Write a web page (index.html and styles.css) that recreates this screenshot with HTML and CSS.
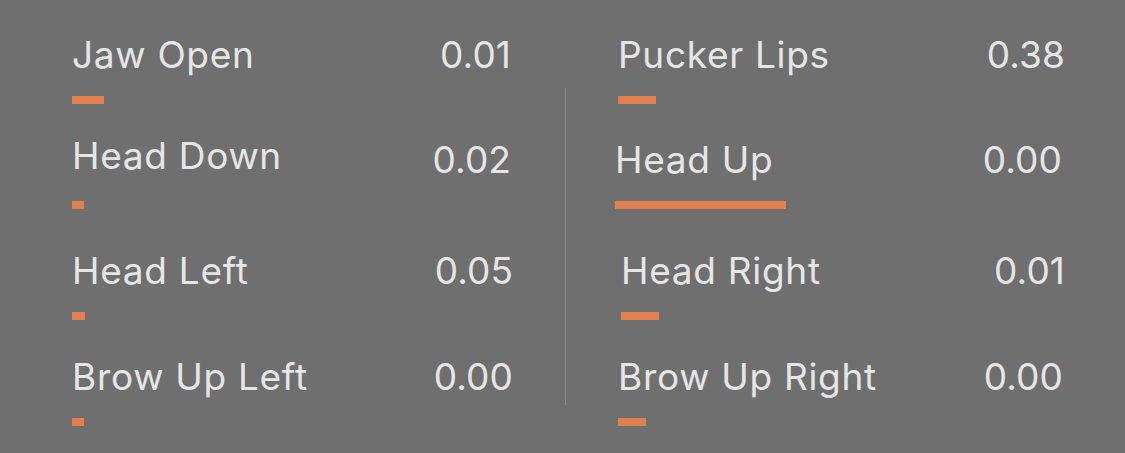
FILE: index.html
```html
<!DOCTYPE html>
<html lang="en">
<head>
<meta charset="utf-8">
<title>Blend Shapes</title>
<link rel="stylesheet" href="styles.css">
</head>
<body>
<div class="panel">
  <div class="column left">
    <div class="item">
      <div class="row"><span class="label">Jaw Open</span><span class="value">0.01</span></div>
      <div class="bar" style="width:32px"></div>
    </div>
    <div class="item">
      <div class="row"><span class="label">Head Down</span><span class="value">0.02</span></div>
      <div class="bar" style="width:12px"></div>
    </div>
    <div class="item">
      <div class="row"><span class="label">Head Left</span><span class="value">0.05</span></div>
      <div class="bar" style="width:13px"></div>
    </div>
    <div class="item">
      <div class="row"><span class="label">Brow Up Left</span><span class="value">0.00</span></div>
      <div class="bar" style="width:12px"></div>
    </div>
  </div>
  <div class="divider"></div>
  <div class="column right">
    <div class="item">
      <div class="row"><span class="label">Pucker Lips</span><span class="value">0.38</span></div>
      <div class="bar" style="width:38px"></div>
    </div>
    <div class="item">
      <div class="row"><span class="label">Head Up</span><span class="value">0.00</span></div>
      <div class="bar" style="width:171px"></div>
    </div>
    <div class="item">
      <div class="row"><span class="label">Head Right</span><span class="value">0.01</span></div>
      <div class="bar" style="width:38px"></div>
    </div>
    <div class="item">
      <div class="row"><span class="label">Brow Up Right</span><span class="value">0.00</span></div>
      <div class="bar" style="width:28px"></div>
    </div>
  </div>
</div>
</body>
</html>
```
FILE: styles.css
```css
html, body {
  margin: 0;
  padding: 0;
  background: #6f6f6f;
  width: 1125px;
  height: 453px;
  overflow: hidden;
}

.panel {
  display: grid;
  grid-template-columns: 441px 1px 447px;
  column-gap: 52px;
  padding: 35px 0 0 72px;
  font-family: "Inter", "Noto Sans", sans-serif;
  color: #e6e6e6;
}

.column {
  display: flex;
  flex-direction: column;
}

.item {
  display: flex;
  flex-direction: column;
  margin-bottom: 37px;
}

.row {
  display: flex;
  justify-content: space-between;
  align-items: flex-start;
  font-size: 37px;
  line-height: 40px;
  font-weight: 400;
}

.label {
  letter-spacing: 0.7px;
}

.value {
  letter-spacing: 0.1px;
}

.bar {
  height: 8px;
  margin-top: 21px;
  background: #e2804f;
}

.divider {
  margin-top: 53px;
  height: 317px;
  background: #8d8d8d;
}

/* row 2 sits a little lower than the others */
.item:nth-child(1) {
  margin-bottom: 36px;
}
.item:nth-child(2) {
  margin-bottom: 42px;
}

/* small per-row offsets from the original layout */
.left .item:nth-child(1) .row,
.left .item:nth-child(2) .row {
  padding-right: 2px;
}
.left .item:nth-child(2) .label {
  margin-top: -4px;
}

.right .item:nth-child(2) {
  margin-left: -3px;
  margin-right: 3px;
}
.right .item:nth-child(3) {
  margin-left: 3px;
}
.right .item:nth-child(4) {
  margin-right: 2px;
}
```
